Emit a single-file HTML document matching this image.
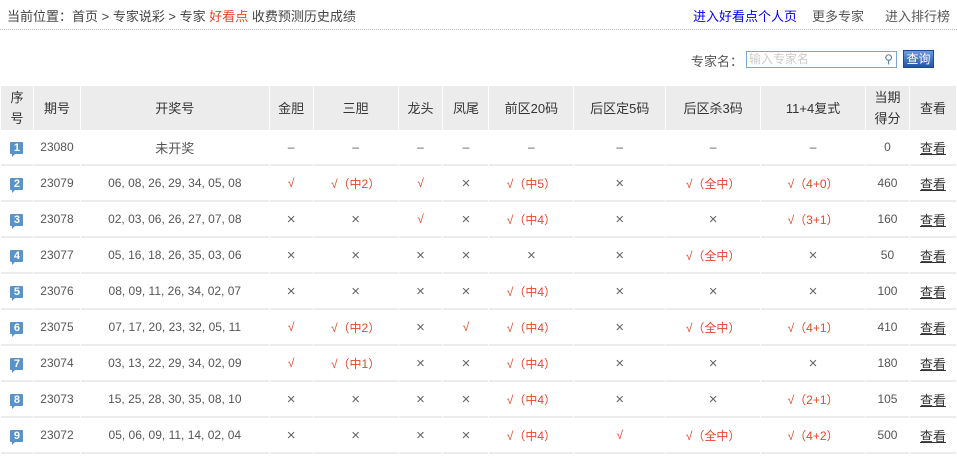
<!DOCTYPE html>
<html><head><meta charset="utf-8"><style>
body{margin:0;width:957px;height:458px;overflow:hidden;background:#fff;font-family:"Liberation Sans","Noto Sans CJK SC",sans-serif;font-size:12px;color:#333}
.top{position:absolute;left:7px;top:6px;font-size:13px;color:#444;white-space:nowrap}
.top .r{color:#e8452c}
.links{position:absolute;top:6px;right:0;font-size:13px;color:#555}
.links span{position:absolute;white-space:nowrap}
.line{position:absolute;left:0;top:29px;width:957px;border-top:1px dotted #bbb}
.search{position:absolute;top:51px;left:691px;font-size:13px;color:#555}
.inp{position:absolute;left:746px;top:51px;width:147px;height:15px;border:1px solid #7aa6d1;font-size:12px;color:#ccc;line-height:15px;padding-left:2px}
.btn{position:absolute;left:903px;top:50px;width:29px;height:16px;background:linear-gradient(#6b9be0,#2456a8);border:1px solid #1d4a8f;color:#fff;font-size:12px;line-height:16px;text-align:center}
table{position:absolute;left:0;top:86px;border-collapse:separate;border-spacing:1px 0;table-layout:fixed}
th{background:#ececec;font-weight:normal;font-size:13px;color:#333;height:44px;line-height:21px;padding:0}
td{height:34px;border-bottom:2px solid #ececec;text-align:center;padding:0;font-size:12px;color:#555}
.x{font-size:15px;color:#666}
.ok{color:#e8452c}
.b{display:inline-block;position:relative;width:13px;height:12px;background:#5a93c8;color:#fff;font-weight:bold;font-size:11px;line-height:12px;border-radius:1px;margin-top:-4px}
.b:after{content:"";position:absolute;left:2px;top:12px;border-left:3px solid #5a93c8;border-bottom:3px solid transparent}
a{color:#333;text-decoration:underline;font-size:13px}
</style></head><body>
<div class="top">当前位置：首页 &gt; 专家说彩 &gt; 专家 <span class="r">好看点</span> 收费预测历史成绩</div>
<div class="links"><span style="left:-264px;color:#0000ee">进入好看点个人页</span><span style="left:-145px">更多专家</span><span style="left:-72px">进入排行榜</span></div>
<div class="line"></div>
<div class="search">专家名：</div>
<div class="inp">输入专家名<span style="position:absolute;right:3px;color:#5a7da8">&#9906;</span></div>
<div class="btn">查询</div>
<table>
<colgroup><col style="width:32px"><col style="width:46px"><col style="width:188px"><col style="width:43px"><col style="width:84px"><col style="width:44px"><col style="width:45px"><col style="width:84px"><col style="width:91px"><col style="width:94px"><col style="width:104px"><col style="width:43px"><col style="width:46px"></colgroup>
<tr><th>序<br>号</th><th>期号</th><th>开奖号</th><th>金胆</th><th>三胆</th><th>龙头</th><th>凤尾</th><th>前区20码</th><th>后区定5码</th><th>后区杀3码</th><th>11+4复式</th><th>当期<br>得分</th><th>查看</th></tr>
<tr><td><span class="b">1</span></td><td>23080</td><td style="font-size:13px">未开奖</td><td>–</td><td>–</td><td>–</td><td>–</td><td>–</td><td>–</td><td>–</td><td>–</td><td>0</td><td><a>查看</a></td></tr>
<tr><td><span class="b">2</span></td><td>23079</td><td>06, 08, 26, 29, 34, 05, 08</td><td class="ok">√</td><td class="ok">√（中2）</td><td class="ok">√</td><td class="x">×</td><td class="ok">√（中5）</td><td class="x">×</td><td class="ok">√（全中）</td><td class="ok">√（4+0）</td><td>460</td><td><a>查看</a></td></tr>
<tr><td><span class="b">3</span></td><td>23078</td><td>02, 03, 06, 26, 27, 07, 08</td><td class="x">×</td><td class="x">×</td><td class="ok">√</td><td class="x">×</td><td class="ok">√（中4）</td><td class="x">×</td><td class="x">×</td><td class="ok">√（3+1）</td><td>160</td><td><a>查看</a></td></tr>
<tr><td><span class="b">4</span></td><td>23077</td><td>05, 16, 18, 26, 35, 03, 06</td><td class="x">×</td><td class="x">×</td><td class="x">×</td><td class="x">×</td><td class="x">×</td><td class="x">×</td><td class="ok">√（全中）</td><td class="x">×</td><td>50</td><td><a>查看</a></td></tr>
<tr><td><span class="b">5</span></td><td>23076</td><td>08, 09, 11, 26, 34, 02, 07</td><td class="x">×</td><td class="x">×</td><td class="x">×</td><td class="x">×</td><td class="ok">√（中4）</td><td class="x">×</td><td class="x">×</td><td class="x">×</td><td>100</td><td><a>查看</a></td></tr>
<tr><td><span class="b">6</span></td><td>23075</td><td>07, 17, 20, 23, 32, 05, 11</td><td class="ok">√</td><td class="ok">√（中2）</td><td class="x">×</td><td class="ok">√</td><td class="ok">√（中4）</td><td class="x">×</td><td class="ok">√（全中）</td><td class="ok">√（4+1）</td><td>410</td><td><a>查看</a></td></tr>
<tr><td><span class="b">7</span></td><td>23074</td><td>03, 13, 22, 29, 34, 02, 09</td><td class="ok">√</td><td class="ok">√（中1）</td><td class="x">×</td><td class="x">×</td><td class="ok">√（中4）</td><td class="x">×</td><td class="x">×</td><td class="x">×</td><td>180</td><td><a>查看</a></td></tr>
<tr><td><span class="b">8</span></td><td>23073</td><td>15, 25, 28, 30, 35, 08, 10</td><td class="x">×</td><td class="x">×</td><td class="x">×</td><td class="x">×</td><td class="ok">√（中4）</td><td class="x">×</td><td class="x">×</td><td class="ok">√（2+1）</td><td>105</td><td><a>查看</a></td></tr>
<tr><td><span class="b">9</span></td><td>23072</td><td>05, 06, 09, 11, 14, 02, 04</td><td class="x">×</td><td class="x">×</td><td class="x">×</td><td class="x">×</td><td class="ok">√（中4）</td><td class="ok">√</td><td class="ok">√（全中）</td><td class="ok">√（4+2）</td><td>500</td><td><a>查看</a></td></tr>
</table>
</body></html>
